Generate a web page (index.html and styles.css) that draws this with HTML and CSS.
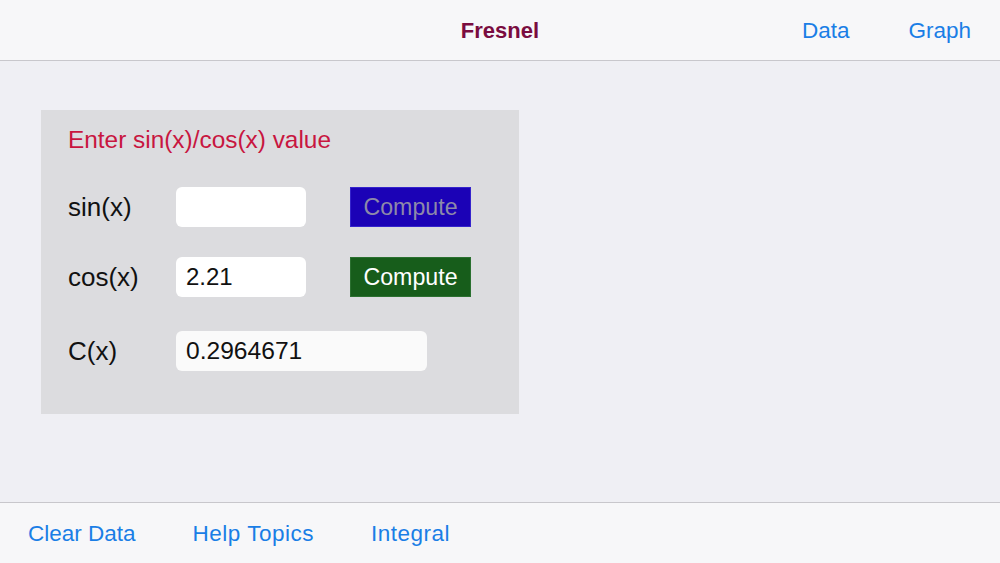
FILE: index.html
```html
<!DOCTYPE html>
<html>
<head>
<meta charset="utf-8">
<link rel="stylesheet" href="styles.css">
</head>
<body>
<div class="app">
  <header class="navbar">
    <div class="nav-left"></div>
    <div class="nav-title">Fresnel</div>
    <div class="nav-right">
      <span class="link">Data</span>
      <span class="link">Graph</span>
    </div>
  </header>
  <main class="content">
    <section class="panel">
      <div class="panel-title">Enter sin(x)/cos(x) value</div>
      <div class="row row-sin">
        <span class="label">sin(x)</span>
        <div class="field"></div>
        <div class="btn btn-blue">Compute</div>
      </div>
      <div class="row row-cos">
        <span class="label">cos(x)</span>
        <div class="field">2.21</div>
        <div class="btn btn-green">Compute</div>
      </div>
      <div class="row row-result">
        <span class="label">C(x)</span>
        <div class="field field-wide">0.2964671</div>
      </div>
    </section>
  </main>
  <footer class="toolbar">
    <span class="link">Clear Data</span>
    <span class="link link-wide">Help Topics</span>
    <span class="link link-wide">Integral</span>
  </footer>
</div>
</body>
</html>
```
FILE: styles.css
```css
html, body {
  margin: 0;
  padding: 0;
}
body {
  width: 1000px;
  height: 563px;
  overflow: hidden;
  font-family: "Liberation Sans", Arial, sans-serif;
  background: #efeff4;
}
.app {
  display: flex;
  flex-direction: column;
  height: 563px;
}
.navbar {
  box-sizing: border-box;
  height: 61px;
  flex: none;
  padding-top: 2px;
  background: #f7f7f9;
  border-bottom: 1px solid #c8c7cc;
  display: grid;
  grid-template-columns: 1fr auto 1fr;
  align-items: center;
}
.nav-title {
  font-weight: bold;
  font-size: 22px;
  color: #7a0c40;
}
.nav-right {
  display: flex;
  justify-content: flex-end;
  gap: 59px;
  padding-right: 29px;
}
.link {
  color: #1a7ee6;
  font-size: 22.5px;
}
.link-wide {
  letter-spacing: 0.5px;
}
.content {
  flex: 1;
  padding: 49px 0 0 41px;
}
.panel {
  box-sizing: border-box;
  width: 478px;
  height: 304px;
  background: #dcdcdf;
  padding: 15px 0 0 27px;
}
.panel-title {
  color: #c8163f;
  font-size: 24.4px;
  line-height: 30px;
}
.row {
  display: flex;
  align-items: center;
  height: 40px;
}
.row-sin { margin-top: 32px; }
.row-cos { margin-top: 30px; }
.row-result { margin-top: 34px; }
.label {
  width: 108px;
  font-size: 26px;
  color: #111;
}
.field {
  box-sizing: border-box;
  width: 130px;
  height: 40px;
  background: #ffffff;
  border-radius: 6px;
  padding-left: 10px;
  font-size: 24px;
  line-height: 40px;
  color: #111;
}
.field-wide {
  width: 251px;
  background: #fafafa;
  font-size: 24.6px;
}
.btn {
  box-sizing: border-box;
  width: 121px;
  height: 40px;
  margin-left: 44px;
  display: flex;
  align-items: center;
  justify-content: center;
  font-size: 23.2px;
}
.btn-blue {
  background: #1b02b6;
  border: 1px solid #3524cc;
  color: #8d89a9;
}
.btn-green {
  background: #175d1b;
  border: 1px solid #2b7030;
  color: #ffffff;
}
.toolbar {
  box-sizing: border-box;
  height: 61px;
  flex: none;
  padding-top: 2px;
  background: #f7f7f9;
  border-top: 1px solid #c8c7cc;
  display: flex;
  align-items: center;
  gap: 57px;
  padding-left: 28px;
}
```
